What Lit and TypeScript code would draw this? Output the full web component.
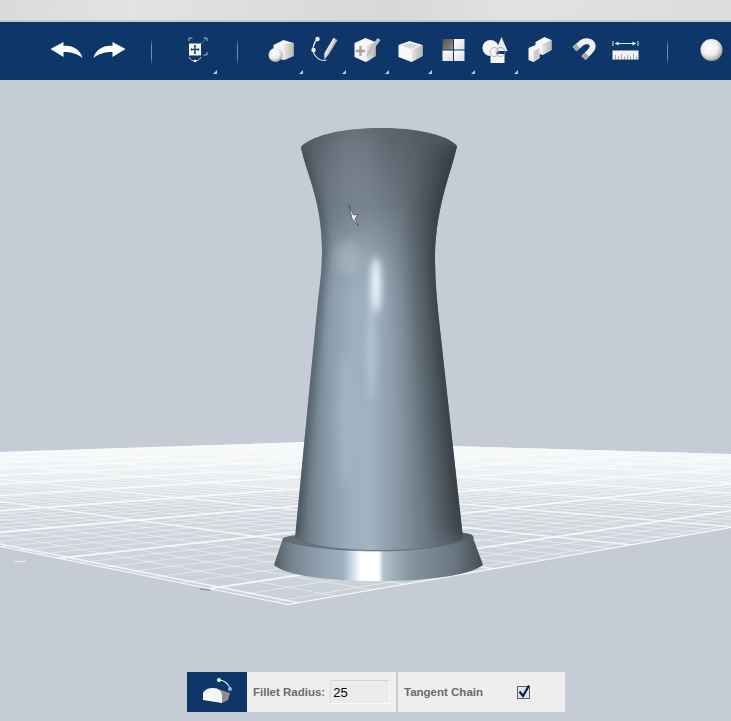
import { LitElement, css, html, svg } from "lit";
import { customElement } from "lit/decorators.js";

// vanishing points of the floor, read off the reference
const LEFT_VP = [-702, 406];
const RIGHT_VP = [1430, 406];
const FRONT_X = 288;
const FRONT_Y = 605;

const cell = (i: number) => `${44.5 + 43 * i} 30 43 40`;

const ICON_DEFS = svg`
    <defs>
        <linearGradient id="cubeFace" x1="0" y1="0" x2="1" y2="1">
            <stop offset="0" stop-color="#ffffff" />
            <stop offset="1" stop-color="#dcdcdc" />
        </linearGradient>
        <linearGradient id="cubeSide" x1="0" y1="0" x2="1" y2="0">
            <stop offset="0" stop-color="#e6e6e6" />
            <stop offset="1" stop-color="#b4b4b4" />
        </linearGradient>
        <linearGradient id="darkTile" x1="0" y1="0" x2="1" y2="1">
            <stop offset="0" stop-color="#54504e" />
            <stop offset="1" stop-color="#938d89" />
        </linearGradient>
        <radialGradient id="ball" cx="0.42" cy="0.38" r="0.62">
            <stop offset="0" stop-color="#ffffff" />
            <stop offset="0.6" stop-color="#eeeeee" />
            <stop offset="1" stop-color="#a2a2a2" />
        </radialGradient>
    </defs>
`;

const ICONS = [
    { i: 0, body: svg`<path d="M50 49 L63 42 L63 46 C72 45 80 50 82 58 C76 53 70 52 63 52 L63 57 Z" fill="#fff" />` },
    { i: 1, body: svg`<path d="M125 49 L112 42 L112 46 C103 45 95 50 93 58 C99 53 105 52 112 52 L112 57 Z" fill="#fff" />` },
    { i: 2, sep: true },
    {
        i: 3,
        drop: true,
        body: svg`
            <path d="M188.5 41 V38 H192 M203 38 H206.5 V41 M206.5 52 V55 H203" fill="none" stroke="#9dbbd8" stroke-width="1" />
            <path d="M200 44 L206 38" stroke="#7f9fc0" stroke-width="0.7" />
            <rect x="188.5" y="43.5" width="12" height="12" fill="#f4f6f8" />
            <path d="M194.5 45.5 V53.5 M190.5 49.5 H198.5" stroke="#1a4272" stroke-width="1.4" />
            <path d="M193 46.5 L194.5 44.8 L196 46.5 M193 52.5 L194.5 54.2 L196 52.5 M191.5 48 L189.8 49.5 L191.5 51 M197.5 48 L199.2 49.5 L197.5 51" fill="#1a4272" />
            <path d="M188.5 57 C190 60 192 61 194.5 61 C197 61 199 60 200.5 57" fill="none" stroke="#cfdbe8" stroke-width="0.9" />
            <circle cx="194.5" cy="61" r="1.3" fill="#fff" />
        `,
    },
    { i: 4, sep: true },
    {
        i: 5,
        drop: true,
        body: svg`
            <path d="M273 45 L283 40 L293 43 L293 56 L283 60 L273 57 Z" fill="url(#cubeFace)" />
            <path d="M284 44 L293 43 L293 56 L284 60 Z" fill="url(#cubeSide)" />
            <circle cx="275" cy="55" r="7" fill="url(#ball)" />
        `,
    },
    {
        i: 6,
        drop: true,
        body: svg`
            <path d="M317 39 C312 44 311 51 315 56 C318 60 322 61 326 60" fill="none" stroke="#d6e4f2" stroke-width="1.2" />
            <circle cx="317" cy="39" r="2.2" fill="#eef2f6" />
            <circle cx="313" cy="50" r="2.2" fill="#eef2f6" />
            <path d="M333 38 L337 40 L328 55 L324 59 L324 53 Z" fill="#b8b8b8" />
            <path d="M333 38 L335 39 L326 56 L324 59 L324 53 Z" fill="#e0e0e0" />
        `,
    },
    {
        i: 7,
        drop: true,
        body: svg`
            <path d="M354 43 L365 38 L375 42 L375 56 L365 62 L354 57 Z" fill="#f6f6f6" />
            <path d="M366 46 L375 42 L375 56 L366 62 Z" fill="url(#cubeSide)" />
            <path d="M360 46 V56 M355.5 51 H364.5" stroke="#a5a5a5" stroke-width="2.4" />
            <path d="M377 38 L380 40 L370 54 L366 57 L367 52 Z" fill="#bdbdbd" />
        `,
    },
    {
        i: 8,
        drop: true,
        body: svg`
            <path d="M398 45 L409 41 L422 45 L422 56 L411 62 L398 57 Z" fill="#f8f8f8" />
            <path d="M401 45.5 L409 43 L419 45.5 L411 49 Z" fill="#d6d6d6" />
            <path d="M411 50 L422 45 L422 56 L411 62 Z" fill="url(#cubeSide)" />
        `,
    },
    {
        i: 9,
        drop: true,
        body: svg`
            <rect x="442" y="39" width="10.5" height="10.5" fill="url(#darkTile)" />
            <rect x="453.5" y="39" width="10.5" height="10.5" fill="url(#cubeFace)" />
            <rect x="442" y="50.5" width="10.5" height="10.5" fill="url(#cubeFace)" />
            <rect x="453.5" y="50.5" width="10.5" height="10.5" fill="url(#cubeFace)" />
        `,
    },
    {
        i: 10,
        drop: true,
        body: svg`
            <circle cx="490" cy="48" r="8" fill="#f6f6f6" />
            <path d="M501 37 L507 51 L495 51 Z" fill="#ececec" />
            <rect x="490" y="54" width="14" height="9" fill="#f6f6f6" />
            <circle cx="494" cy="52" r="4.5" fill="none" stroke="#9aa6b4" stroke-width="0.8" />
            <circle cx="500" cy="52" r="4.5" fill="none" stroke="#9aa6b4" stroke-width="0.8" />
        `,
    },
    {
        i: 11,
        body: svg`
            <path d="M528 48 L535 45 L535 42 L544 37 L551 40 L551 50 L542 55 L539 54 L539 58 L533 62 L528 60 Z" fill="#f6f6f6" />
            <path d="M533 51 L539 48 L539 58 L533 62 Z" fill="#cccccc" />
            <path d="M542 44 L551 40 L551 50 L542 55 Z" fill="url(#cubeSide)" />
        `,
    },
    {
        i: 12,
        body: svg`
            <path d="M574 49 L581 43 C585 40 591 41 592 45 C593 48 591 50 589 52 L583 58" fill="none" stroke="#f0f0f0" stroke-width="6" />
            <path d="M574 49 L577.500 46 M583 58 L586.500 54.500" fill="none" stroke="#a8a8a8" stroke-width="6" />
        `,
    },
    {
        i: 13,
        body: svg`
            <path d="M612.500 41 V46 M637.500 41 V46 M615 43.500 H635" stroke="#dfe8f2" stroke-width="1" fill="none" />
            <path d="M618 41.500 L614.500 43.500 L618 45.500 Z M632 41.500 L635.500 43.500 L632 45.500 Z" fill="#fff" />
            <rect x="612" y="50.500" width="26" height="9" fill="#f3f3f3" />
            <path d="M615 59 V55 M618 59 V56.500 M621 59 V54 M624 59 V56.500 M627 59 V55 M630 59 V56.500 M633 59 V54 M636 59 V56.500" stroke="#85898e" stroke-width="0.8" />
        `,
    },
    { i: 14, sep: true },
    { i: 15, body: svg`<circle cx="711" cy="50" r="11" fill="url(#ball)" />` },
];

@customElement("app-root")
export class AppRoot extends LitElement {
    static styles = css`
        :host {
            display: block;
            position: relative;
            width: 731px;
            height: 721px;
            overflow: hidden;
            background-color: #c5ccd5;
            font-family: "Liberation Sans", Arial, sans-serif;
        }
        .strip {
            height: 20px;
            border-bottom: 2px solid #c9c6c4;
            background: linear-gradient(100deg, #d8dadc 0%, #e2e3e5 18%, #d9dbdd 42%, #d6d8da 54%, #e1e2e4 70%, #dadcde 100%);
        }
        .toolbar {
            height: 58px;
            padding-left: 44.5px;
            display: flex;
            flex-direction: row;
            background-color: #0e3668;
        }
        .cell {
            position: relative;
            flex: none;
            width: 43px;
            height: 58px;
            display: flex;
            align-items: center;
            justify-content: center;
        }
        .cell svg {
            display: block;
            width: 43px;
            height: 40px;
            margin-top: -2px;
            overflow: hidden;
        }
        .sep {
            width: 1px;
            height: 26px;
            margin-top: 1px;
            margin-right: 2px;
            background: linear-gradient(#0e3668, #6d8bad 25%, #6d8bad 75%, #0e3668);
        }
        .drop {
            position: absolute;
            left: 39px;
            top: 48px;
            width: 0;
            height: 0;
            border-left: 4px solid transparent;
            border-bottom: 4px solid #b9cbe0;
        }
        .scene {
            display: block;
            width: 731px;
            height: 641px;
        }
        .panel {
            position: absolute;
            left: 187px;
            top: 672px;
            height: 40px;
            display: flex;
            flex-direction: row;
            gap: 2px;
            color: #6c6c6c;
            font-size: 11.5px;
            font-weight: bold;
        }
        .tool {
            width: 60px;
            height: 40px;
            flex: none;
            background-color: #0e3668;
        }
        .tool svg {
            display: block;
        }
        .group {
            height: 40px;
            display: flex;
            align-items: center;
            background-color: #eeeeee;
        }
        .radius {
            width: 149px;
            margin-left: -2px;
            padding-left: 6px;
            box-sizing: border-box;
        }
        .chain {
            width: 167px;
            padding-left: 6px;
            box-sizing: border-box;
        }
        .value {
            width: 60px;
            height: 24px;
            margin-left: 5px;
            padding-left: 2px;
            box-sizing: border-box;
            line-height: 23px;
            color: #000000;
            font-size: 13px;
            font-weight: normal;
            background-color: #ececec;
            border: 1px solid #fafafa;
            border-top-color: #d4d4d4;
            border-left-color: #dcdcdc;
        }
        .check {
            display: block;
            margin-left: 33px;
        }
    `;

    floorLines() {
        const line = (vp: number[], x: number, width: number, opacity: number) =>
            svg`<line x1=${vp[0]} y1=${vp[1]} x2=${x} y2=${FRONT_Y} stroke="#f8fafb" stroke-width=${width} stroke-opacity=${opacity} />`;
        const lines = [line(RIGHT_VP, FRONT_X, 2, 1), line(LEFT_VP, FRONT_X, 2, 1)];
        for (let k = 0; k < 66; k++) {
            // bright lines every sixth one, each direction has its own offset
            const rightBright = k % 6 === 2;
            const leftBright = k % 6 === 0;
            lines.push(line(RIGHT_VP, FRONT_X - (34 + k * 77), rightBright ? 1.8 : 0.9, rightBright ? 0.95 : 0.55));
            lines.push(line(LEFT_VP, FRONT_X + (22 + k * 75), leftBright ? 1.6 : 0.9, leftBright ? 0.85 : 0.55));
        }
        return lines;
    }

    scene() {
        const leftEdge = "M301 147 C305 170 322 200 322 250 C322 268 320 285 318 300 L295 538";
        const rightEdge = "M457 146 C452 170 436 205 435 255 C435 280 437 300 439 320 L463 538";
        const body = "M301 147 C305 170 322 200 322 250 C322 268 320 285 318 300 L295 538 C310 546 345 550 379 550 C415 550 450 546 463 538 L439 320 C437 300 435 280 435 255 C436 205 452 170 457 146 C435 122 325 122 301 147 Z";
        return svg`
            <svg class="scene" viewBox="0 80 731 641" xmlns="http://www.w3.org/2000/svg">
                <defs>
                    <linearGradient id="floor" x1="0" y1="442" x2="0" y2="605" gradientUnits="userSpaceOnUse">
                        <stop offset="0" stop-color="#f1f3f5" />
                        <stop offset="0.16" stop-color="#e4e8ec" />
                        <stop offset="0.4" stop-color="#d2d8df" />
                        <stop offset="1" stop-color="#c9d0d8" />
                    </linearGradient>
                    <linearGradient id="round" x1="295" y1="0" x2="463" y2="0" gradientUnits="userSpaceOnUse">
                        <stop offset="0" stop-color="#56626c" />
                        <stop offset="0.08" stop-color="#6f7e8a" />
                        <stop offset="0.2" stop-color="#8a9baa" />
                        <stop offset="0.34" stop-color="#9eafbe" />
                        <stop offset="0.45" stop-color="#a2b3c2" />
                        <stop offset="0.56" stop-color="#90a0ae" />
                        <stop offset="0.72" stop-color="#76848f" />
                        <stop offset="0.88" stop-color="#636f7a" />
                        <stop offset="1" stop-color="#56606a" />
                    </linearGradient>
                    <linearGradient id="shadeTop" x1="0" y1="128" x2="0" y2="300" gradientUnits="userSpaceOnUse">
                        <stop offset="0" stop-color="#4c5259" stop-opacity="0.78" />
                        <stop offset="0.45" stop-color="#525a62" stop-opacity="0.55" />
                        <stop offset="0.8" stop-color="#59626b" stop-opacity="0.12" />
                        <stop offset="1" stop-color="#59626b" stop-opacity="0" />
                    </linearGradient>
                    <linearGradient id="baseSide" x1="274" y1="0" x2="483" y2="0" gradientUnits="userSpaceOnUse">
                        <stop offset="0" stop-color="#515c65" />
                        <stop offset="0.08" stop-color="#74838f" />
                        <stop offset="0.2" stop-color="#8d9dab" />
                        <stop offset="0.33" stop-color="#9db0c0" />
                        <stop offset="0.39" stop-color="#dfeaf3" />
                        <stop offset="0.415" stop-color="#ffffff" />
                        <stop offset="0.5" stop-color="#ffffff" />
                        <stop offset="0.525" stop-color="#b0c0cd" />
                        <stop offset="0.65" stop-color="#8695a2" />
                        <stop offset="0.85" stop-color="#6c7984" />
                        <stop offset="1" stop-color="#444c53" />
                    </linearGradient>
                    <linearGradient id="baseTop" x1="283" y1="0" x2="473" y2="0" gradientUnits="userSpaceOnUse">
                        <stop offset="0" stop-color="#5f6b75" />
                        <stop offset="0.5" stop-color="#75838f" />
                        <stop offset="1" stop-color="#4f5962" />
                    </linearGradient>
                    <filter id="soft" filterUnits="userSpaceOnUse" x="240" y="90" width="280" height="520">
                        <feGaussianBlur stdDeviation="5" />
                    </filter>
                    <filter id="softer" filterUnits="userSpaceOnUse" x="240" y="90" width="280" height="520">
                        <feGaussianBlur stdDeviation="12" />
                    </filter>
                    <filter id="streak" filterUnits="userSpaceOnUse" x="240" y="90" width="280" height="520">
                        <feGaussianBlur stdDeviation="3.500" />
                    </filter>
                    <clipPath id="floorClip">
                        <path d="M0 452 L310 442 L731 454 V528 L288 605 L0 547 Z" />
                    </clipPath>
                    <clipPath id="bodyClip"><path d=${body} /></clipPath>
                </defs>

                <path d="M0 452 L310 442 L731 454 V528 L288 605 L0 547 Z" fill="url(#floor)" />
                <g clip-path="url(#floorClip)">${this.floorLines()}</g>
                <path d="M14 562 L26 561" stroke="#eef1f4" stroke-width="1" />
                <path d="M200 589 L210 590" stroke="#8e959c" stroke-width="1.500" />

                <path d="M283 538 C310 530 450 528 472 535 L483 565 C470 575 430 581 379 581 C325 581 285 575 274 565 Z" fill="url(#baseSide)" />
                <path d="M283 538 C305 529 452 526 472 535 L474 538 C450 546 415 551 378 551 C340 551 305 547 284 541 Z" fill="url(#baseTop)" />
                <path d="M284 541 C305 547 340 551 378 551 C415 551 450 546 474 538" fill="none" stroke="#59646d" stroke-width="0.8" stroke-opacity="0.7" />

                <rect x="280" y="120" width="200" height="435" fill="url(#round)" clip-path="url(#bodyClip)" />
                <g clip-path="url(#bodyClip)">
                    <rect x="280" y="120" width="200" height="200" fill="url(#shadeTop)" />
                    <path d=${rightEdge} fill="none" stroke="#2b3036" stroke-width="46" opacity="0.5" filter="url(#softer)" />
                    <path d=${rightEdge} fill="none" stroke="#2b3036" stroke-width="8" opacity="0.6" filter="url(#soft)" />
                    <path d=${leftEdge} fill="none" stroke="#3a434b" stroke-width="9" opacity="0.6" filter="url(#soft)" />
                    <ellipse cx="348" cy="258" rx="14" ry="18" fill="#aeb9c3" opacity="0.5" filter="url(#soft)" />
                    <ellipse cx="352" cy="165" rx="22" ry="45" fill="#838f9a" opacity="0.4" filter="url(#softer)" />
                    <ellipse cx="376" cy="285" rx="5" ry="28" fill="#f0f8ff" filter="url(#streak)" />
                    <ellipse cx="372" cy="350" rx="4" ry="50" fill="#c4d3e1" opacity="0.55" filter="url(#streak)" />
                    <ellipse cx="345" cy="420" rx="9" ry="70" fill="#b8c9d8" opacity="0.3" filter="url(#soft)" />
                </g>

                <path d="M349 205 L353.500 215 L358 214.500 L355 219 L358.500 226 L352 218.500 Z" fill="#ececec" stroke="#30363c" stroke-width="0.6" />
            </svg>
        `;
    }

    render() {
        return html`
            <div class="strip"></div>
            <div class="toolbar">
                ${ICONS.map((icon) => html`
                    <div class="cell">
                        ${icon.sep
                            ? html`<div class="sep"></div>`
                            : html`<svg viewBox=${cell(icon.i)} xmlns="http://www.w3.org/2000/svg">${icon.i === 0 ? ICON_DEFS : ""}${icon.body}</svg>`}
                        ${icon.drop ? html`<div class="drop"></div>` : ""}
                    </div>
                `)}
            </div>
            ${this.scene()}
            <div class="panel">
                <div class="tool">
                    <svg width="60" height="40" viewBox="187 672 60 40" xmlns="http://www.w3.org/2000/svg">
                        <path d="M215 688 L230 693 L228 700 L222 703 Z" fill="#8f8f8f" />
                        <path d="M203 693 C205 689 209 688 213 688 C218 688 222 691 222 696 V703 L203 700 Z" fill="#f6f6f6" />
                        <path d="M219 680 C224 680 229 684 230 689" fill="none" stroke="#ffffff" stroke-width="1.200" />
                        <circle cx="219" cy="680" r="2" fill="#ffffff" />
                        <circle cx="230" cy="689" r="2" fill="#9fb6cf" />
                    </svg>
                </div>
                <div class="group radius">
                    <span>Fillet Radius:</span>
                    <div class="value">25</div>
                </div>
                <div class="group chain">
                    <span>Tangent Chain</span>
                    <svg class="check" width="16" height="16" viewBox="0 0 16 16" xmlns="http://www.w3.org/2000/svg">
                        <rect x="1.500" y="2.500" width="12" height="12" fill="#dde3ee" stroke="#56617a" />
                        <path d="M3.500 7.500 L7 12 L13 1.500" fill="none" stroke="#0b1f3e" stroke-width="2.200" />
                    </svg>
                </div>
            </div>
        `;
    }
}
